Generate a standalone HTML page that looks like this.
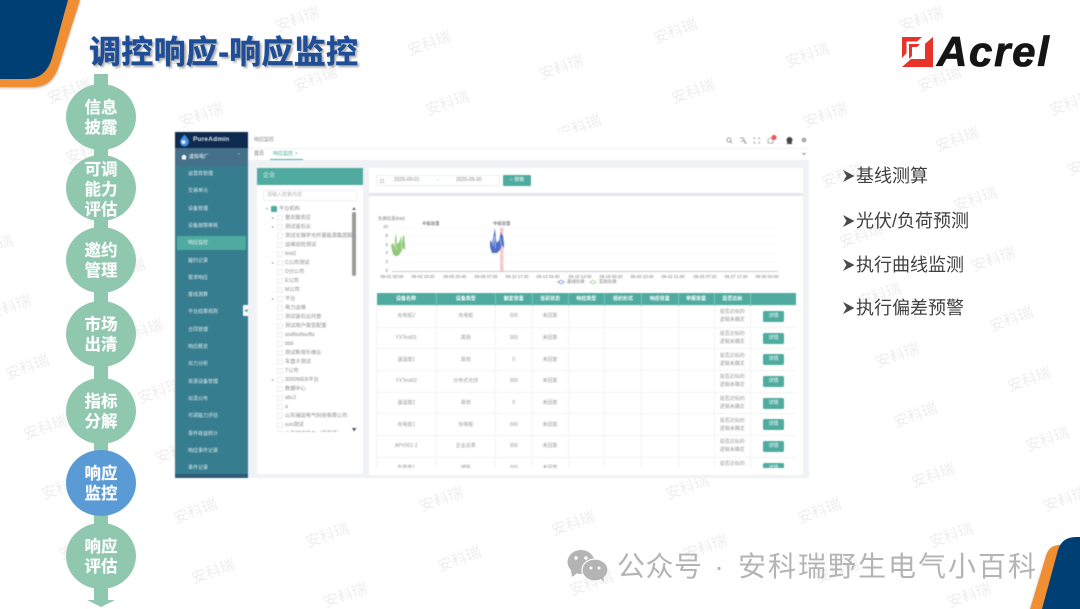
<!DOCTYPE html>
<html lang="zh-CN">
<head>
<meta charset="utf-8">
<title>调控响应-响应监控</title>
<style>
*{box-sizing:border-box;margin:0;padding:0}
html,body{width:1080px;height:609px;overflow:hidden;background:#fff}
body{position:relative;font-family:"Liberation Sans","Noto Sans CJK SC",sans-serif}
.a{position:absolute;white-space:nowrap}
svg.full{position:absolute;left:0;top:0;width:1080px;height:609px}
.wm text{font-size:15px;fill:#000;fill-opacity:.07;font-family:"Liberation Sans","Noto Sans CJK SC",sans-serif}
.ci{position:absolute;left:66px;width:70px;height:66px;padding-top:3px;border-radius:50%;background:#8fc8ae;color:#fff;font-weight:700;font-size:16.5px;line-height:19.5px;text-align:center;display:flex;align-items:center;justify-content:center;text-shadow:0 0 1px rgba(255,255,255,.5)}
.b{position:absolute;left:856px;font-size:18px;line-height:24px;color:#404040;white-space:nowrap;font-family:"Liberation Sans","Noto Sans CJK SC",sans-serif}
#app{position:absolute;left:0;top:0;width:1080px;height:609px;filter:blur(.45px)}
.m{position:absolute;left:188px;font-size:5px;line-height:8px;color:rgba(255,255,255,.85);white-space:nowrap}
.t{position:absolute;left:285px;font-size:5.2px;line-height:8px;color:#8a8a8a;white-space:nowrap}
.cb{position:absolute;left:277px;width:5.5px;height:5.5px;border:.5px solid #ececec;background:#fff;border-radius:1px}
.ar{position:absolute;left:272px;font-size:4px;line-height:8px;color:#999}
.xl{position:absolute;top:273.5px;width:30px;margin-left:-15px;text-align:center;font-size:4.3px;line-height:6px;color:#777;white-space:nowrap}
.yl{position:absolute;left:379px;width:9px;text-align:right;font-size:4.4px;line-height:6px;color:#777}
table{border-collapse:collapse;table-layout:fixed;width:420px;font-size:5px;color:#999;text-align:center}
th{background:#4fab9f;color:#fff;height:13px;font-weight:700;font-size:5px;border-right:.5px solid #7cc2b8;padding:0}
td{height:21.7px;border:.5px solid #f1f3f4;padding:0;line-height:8px;overflow:hidden}
.btn{display:inline-block;width:21px;height:11px;line-height:11px;background:#4fab9f;color:#fff;border-radius:1.5px;font-size:5px;vertical-align:middle}
</style>
</head>
<body>

<svg class="full wm" viewBox="0 0 1080 609"><g transform="translate(2 4)">
<text transform="translate(-9 248) rotate(-20)" text-anchor="middle">安科瑞</text>
<text transform="translate(9 308) rotate(-20)" text-anchor="middle">安科瑞</text>
<text transform="translate(27 368) rotate(-20)" text-anchor="middle">安科瑞</text>
<text transform="translate(45 428) rotate(-20)" text-anchor="middle">安科瑞</text>
<text transform="translate(63 488) rotate(-20)" text-anchor="middle">安科瑞</text>
<text transform="translate(81 548) rotate(-20)" text-anchor="middle">安科瑞</text>
<text transform="translate(69 92) rotate(-20)" text-anchor="middle">安科瑞</text>
<text transform="translate(87 152) rotate(-20)" text-anchor="middle">安科瑞</text>
<text transform="translate(105 212) rotate(-20)" text-anchor="middle">安科瑞</text>
<text transform="translate(123 272) rotate(-20)" text-anchor="middle">安科瑞</text>
<text transform="translate(141 332) rotate(-20)" text-anchor="middle">安科瑞</text>
<text transform="translate(159 392) rotate(-20)" text-anchor="middle">安科瑞</text>
<text transform="translate(177 452) rotate(-20)" text-anchor="middle">安科瑞</text>
<text transform="translate(195 512) rotate(-20)" text-anchor="middle">安科瑞</text>
<text transform="translate(213 572) rotate(-20)" text-anchor="middle">安科瑞</text>
<text transform="translate(183 56) rotate(-20)" text-anchor="middle">安科瑞</text>
<text transform="translate(201 116) rotate(-20)" text-anchor="middle">安科瑞</text>
<text transform="translate(327 536) rotate(-20)" text-anchor="middle">安科瑞</text>
<text transform="translate(345 596) rotate(-20)" text-anchor="middle">安科瑞</text>
<text transform="translate(297 20) rotate(-20)" text-anchor="middle">安科瑞</text>
<text transform="translate(315 80) rotate(-20)" text-anchor="middle">安科瑞</text>
<text transform="translate(441 500) rotate(-20)" text-anchor="middle">安科瑞</text>
<text transform="translate(459 560) rotate(-20)" text-anchor="middle">安科瑞</text>
<text transform="translate(429 44) rotate(-20)" text-anchor="middle">安科瑞</text>
<text transform="translate(447 104) rotate(-20)" text-anchor="middle">安科瑞</text>
<text transform="translate(573 524) rotate(-20)" text-anchor="middle">安科瑞</text>
<text transform="translate(591 584) rotate(-20)" text-anchor="middle">安科瑞</text>
<text transform="translate(561 68) rotate(-20)" text-anchor="middle">安科瑞</text>
<text transform="translate(579 128) rotate(-20)" text-anchor="middle">安科瑞</text>
<text transform="translate(687 488) rotate(-20)" text-anchor="middle">安科瑞</text>
<text transform="translate(705 548) rotate(-20)" text-anchor="middle">安科瑞</text>
<text transform="translate(675 32) rotate(-20)" text-anchor="middle">安科瑞</text>
<text transform="translate(693 92) rotate(-20)" text-anchor="middle">安科瑞</text>
<text transform="translate(819 512) rotate(-20)" text-anchor="middle">安科瑞</text>
<text transform="translate(837 572) rotate(-20)" text-anchor="middle">安科瑞</text>
<text transform="translate(807 56) rotate(-20)" text-anchor="middle">安科瑞</text>
<text transform="translate(825 116) rotate(-20)" text-anchor="middle">安科瑞</text>
<text transform="translate(843 176) rotate(-20)" text-anchor="middle">安科瑞</text>
<text transform="translate(861 236) rotate(-20)" text-anchor="middle">安科瑞</text>
<text transform="translate(879 296) rotate(-20)" text-anchor="middle">安科瑞</text>
<text transform="translate(897 356) rotate(-20)" text-anchor="middle">安科瑞</text>
<text transform="translate(915 416) rotate(-20)" text-anchor="middle">安科瑞</text>
<text transform="translate(933 476) rotate(-20)" text-anchor="middle">安科瑞</text>
<text transform="translate(951 536) rotate(-20)" text-anchor="middle">安科瑞</text>
<text transform="translate(969 596) rotate(-20)" text-anchor="middle">安科瑞</text>
<text transform="translate(921 20) rotate(-20)" text-anchor="middle">安科瑞</text>
<text transform="translate(939 80) rotate(-20)" text-anchor="middle">安科瑞</text>
<text transform="translate(957 140) rotate(-20)" text-anchor="middle">安科瑞</text>
<text transform="translate(975 200) rotate(-20)" text-anchor="middle">安科瑞</text>
<text transform="translate(993 260) rotate(-20)" text-anchor="middle">安科瑞</text>
<text transform="translate(1011 320) rotate(-20)" text-anchor="middle">安科瑞</text>
<text transform="translate(1029 380) rotate(-20)" text-anchor="middle">安科瑞</text>
<text transform="translate(1047 440) rotate(-20)" text-anchor="middle">安科瑞</text>
<text transform="translate(1065 500) rotate(-20)" text-anchor="middle">安科瑞</text>
<text transform="translate(1071 104) rotate(-20)" text-anchor="middle">安科瑞</text>
<text transform="translate(1089 164) rotate(-20)" text-anchor="middle">安科瑞</text>
</g></svg>

<!-- corner shapes -->
<svg class="full" viewBox="0 0 1080 609">
<defs><filter id="s" x="-20%" y="-20%" width="140%" height="140%"><feDropShadow dx="0" dy="1" stdDeviation="1.2" flood-color="#000" flood-opacity=".3"/></filter></defs>
<path d="M0 0H80L59 66Q52 87 34 87H0Z" fill="#ef8e33" filter="url(#s)"/>
<path d="M0 0H68L52 58Q46 79 26 79H0Z" fill="#003f73"/>
<path d="M1030 609L1046 556Q1049 545 1060 545H1080V609Z" fill="#ef8e33" filter="url(#s)"/>
<path d="M1042 609L1058 550Q1062 537 1076 537H1080V609Z" fill="#003f73"/>
<!-- stem -->
<rect x="94" y="74" width="14" height="527" fill="#8fc8ae"/>
<path d="M87 600H115L101 607Z" fill="#8fc8ae"/>
</svg>

<div class="a" style="left:89px;top:29px;font-size:32px;line-height:46px;font-weight:700;color:#1f4e96;-webkit-text-stroke:.5px #1f4e96;text-shadow:2px 2px 2px rgba(0,0,0,.35);letter-spacing:.3px">调控响应-响应监控</div>

<!-- logo -->
<svg class="full" viewBox="0 0 1080 609">
<path d="M933 37V67H902L911 59H925V44Z" fill="#e8322a"/>
<path d="M902 37H922L917 41.500H906.500V53L902 58Z" fill="#e8322a"/>
<path d="M909 44H920L917 47H912V56L909 59Z" fill="#e8322a"/>
<path d="M912 47H925V59H912Z" fill="#fff"/>
<path d="M925 44L933 37V44Z" fill="#e8322a"/>
<text x="937" y="66" font-family="Liberation Sans" font-weight="700" font-style="italic" font-size="42" letter-spacing="1.700" fill="#151515" stroke="#151515" stroke-width=".8">Acrel</text>
</svg>

<!-- circles -->
<div class="ci" style="top:84px">信息<br>披露</div>
<div class="ci" style="top:155px;line-height:20px">可调<br>能力<br>评估</div>
<div class="ci" style="top:227px">邀约<br>管理</div>
<div class="ci" style="top:301px">市场<br>出清</div>
<div class="ci" style="top:378px">指标<br>分解</div>
<div class="ci" style="top:450px;background:#5b9bd5">响应<br>监控</div>
<div class="ci" style="top:523px">响应<br>评估</div>

<!-- application screenshot -->
<div id="app">
<div class="a" style="left:175px;top:132px;width:634px;height:346px;background:#fff"></div>
<!-- sidebar -->
<div class="a" style="left:175px;top:148px;width:73px;height:330px;background:#367d8f"></div>
<div class="a" style="left:175px;top:132px;width:73px;height:16px;background:#0e2a4e"></div>
<div class="a" style="left:175px;top:148px;width:73px;height:18px;background:#44708a"></div>
<div class="a" style="left:175px;top:474px;width:73px;height:4px;background:#2f5a7a"></div>
<svg class="a" style="left:179px;top:134px" width="11" height="13" viewBox="0 0 11 13"><path d="M5.500 .5C8 3.500 10 5.500 10 8A4.500 4.500 0 0 1 1 8C1 5.500 3 3.500 5.500 .5Z" fill="#3f8fe0"/><circle cx="4.500" cy="8" r="2" fill="#dbeeff"/></svg>
<div class="a" style="left:193px;top:136px;font-size:6.500px;line-height:8px;font-weight:700;color:#dfe6ee;letter-spacing:.2px">PureAdmin</div>
<svg class="a" style="left:181px;top:154px" width="6" height="6" viewBox="0 0 6 6"><path d="M3 .5L6 3H5V5.500H1V3H0Z" fill="#fff"/></svg>
<div class="a" style="left:189px;top:153px;font-size:5px;line-height:8px;color:#fff">虚拟电厂</div>
<div class="a" style="left:237px;top:152px;font-size:5px;line-height:8px;color:#cfe0e6">⌃</div>
<div class="a" style="left:177px;top:236px;width:69px;height:14px;background:#4fab9f;border-radius:1px"></div>
<div class="m" style="top:170px">运营商管理</div>
<div class="m" style="top:187.300px">交易单元</div>
<div class="m" style="top:204.700px">设备管理</div>
<div class="m" style="top:222px">设备故障审核</div>
<div class="m" style="top:239.300px">响应监控</div>
<div class="m" style="top:256.700px">履约记录</div>
<div class="m" style="top:274px">需求响应</div>
<div class="m" style="top:291.300px">基线测算</div>
<div class="m" style="top:308.300px">平台结算规则</div>
<div class="m" style="top:325.600px">合同管理</div>
<div class="m" style="top:343px">响应概览</div>
<div class="m" style="top:360.300px">出力分析</div>
<div class="m" style="top:377.600px">资源设备管理</div>
<div class="m" style="top:395px">出清公布</div>
<div class="m" style="top:412.300px">可调能力评估</div>
<div class="m" style="top:429.600px">事件收益统计</div>
<div class="m" style="top:447px">响应事件记录</div>
<div class="m" style="top:464px">事件记录</div>
<div class="a" style="left:243px;top:305px;width:5px;height:11px;background:#fff;border-radius:1px 0 0 1px"></div>
<div class="a" style="left:244px;top:308px;font-size:4px;line-height:5px;color:#4fab9f">◀</div>

<!-- top bar -->
<div class="a" style="left:254px;top:136px;font-size:5px;line-height:8px;color:#888">响应监控</div>
<div class="a" style="left:248px;top:148px;width:561px;height:.6px;background:#f2f2f2"></div>
<div class="a" style="left:254px;top:150px;font-size:5px;line-height:8px;color:#777">首页</div>
<div class="a" style="left:273px;top:150px;font-size:5px;line-height:8px;color:#4fab9f">响应监控</div>
<div class="a" style="left:295px;top:150px;font-size:5px;line-height:8px;color:#6bb">×</div>
<div class="a" style="left:270px;top:158.500px;width:33px;height:1.200px;background:#4fab9f"></div>
<svg class="a" style="left:725px;top:135px" width="85" height="24" viewBox="0 0 85 24">
<circle cx="4" cy="5" r="2" fill="none" stroke="#888" stroke-width=".8"/><path d="M5.500 6.500L7 8" stroke="#888" stroke-width=".8"/>
<path d="M15 3h3l3 5h-2M16 6h3" fill="none" stroke="#888" stroke-width=".8"/>
<path d="M29 4.500V3h1.500M33 3h1.500V4.500M34.500 6.500V8H33M30.500 8H29V6.500" fill="none" stroke="#999" stroke-width=".7"/>
<path d="M43 8V4.500L45.500 3L48 4.500V8Z" fill="none" stroke="#999" stroke-width=".7"/>
<circle cx="49" cy="2.500" r="2.600" fill="#ef5a5a"/>
<circle cx="64.500" cy="5" r="3" fill="#444"/><path d="M61.500 9L64.500 4L67.500 9Z" fill="#444"/>
<circle cx="79" cy="5" r="2.300" fill="#999"/><circle cx="79" cy="5" r=".8" fill="#ddd"/>
<path d="M77.500 18l1.500 1.500 1.500-1.500" fill="none" stroke="#666" stroke-width=".7"/>
</svg>

<!-- content bg -->
<div class="a" style="left:248px;top:160px;width:561px;height:318px;background:#f0f2f6"></div>

<!-- left card -->
<div class="a" style="left:257px;top:168px;width:106px;height:306px;background:#fff"></div>
<div class="a" style="left:257px;top:168px;width:106px;height:17px;background:#4fab9f"></div>
<div class="a" style="left:263px;top:172px;font-size:6px;line-height:9px;color:#e8f5f3">企业</div>
<div class="a" style="left:263px;top:190px;width:94px;height:11px;border:.6px solid #eceef1;border-radius:1px"></div>
<div class="a" style="left:267px;top:192px;font-size:5px;line-height:7px;color:#b5b5b5">请输入检索内容</div>
<div class="a" style="left:257px;top:204px;width:95px;height:228px;overflow:hidden">
<div style="position:absolute;left:-257px;top:-204px;width:400px;height:500px">
<div class="ar" style="left:266px;top:205px">▾</div>
<div class="cb" style="left:271px;top:206px;background:#4fab9f;border-color:#4fab9f"></div>
<div class="t" style="left:279px;top:205px">平台机构</div>
<div class="ar" style="top:214px">▸</div><div class="cb" style="top:215px"></div><div class="t" style="top:214px">重庆服务区</div>
<div class="ar" style="top:223px">▸</div><div class="cb" style="top:224px"></div><div class="t" style="top:223px">测试宙石云</div>
<div class="cb" style="top:233px"></div><div class="t" style="top:232px">测试无锡学光纤屋能源集团股份有限公司</div>
<div class="cb" style="top:242px"></div><div class="t" style="top:241px">运维巡检测试</div>
<div class="cb" style="top:251px"></div><div class="t" style="top:250px">test2</div>
<div class="ar" style="top:259px">▸</div><div class="cb" style="top:260px"></div><div class="t" style="top:259px">C公司测试</div>
<div class="cb" style="top:269px"></div><div class="t" style="top:268px">D分公司</div>
<div class="cb" style="top:278px"></div><div class="t" style="top:277px">E公司</div>
<div class="cb" style="top:287px"></div><div class="t" style="top:286px">M公司</div>
<div class="ar" style="top:295px">▸</div><div class="cb" style="top:296px"></div><div class="t" style="top:295px">平台</div>
<div class="cb" style="top:305px"></div><div class="t" style="top:304px">电力运维</div>
<div class="cb" style="top:314px"></div><div class="t" style="top:313px">测试宙石云托管</div>
<div class="cb" style="top:323px"></div><div class="t" style="top:322px">测试用户报告配置</div>
<div class="cb" style="top:332px"></div><div class="t" style="top:331px">asdfasfasdfa</div>
<div class="cb" style="top:341px"></div><div class="t" style="top:340px">bbb</div>
<div class="cb" style="top:350px"></div><div class="t" style="top:349px">测试新增乐维云</div>
<div class="cb" style="top:359px"></div><div class="t" style="top:358px">车盘子测试</div>
<div class="cb" style="top:368px"></div><div class="t" style="top:367px">T公司</div>
<div class="ar" style="top:376px">▸</div><div class="cb" style="top:377px"></div><div class="t" style="top:376px">3000WEB平台</div>
<div class="cb" style="top:386px"></div><div class="t" style="top:385px">数据中心</div>
<div class="cb" style="top:395px"></div><div class="t" style="top:394px">abc2</div>
<div class="cb" style="top:404px"></div><div class="t" style="top:403px">a</div>
<div class="cb" style="top:413px"></div><div class="t" style="top:412px">山东瑞迩电气科技有限公司</div>
<div class="cb" style="top:422px"></div><div class="t" style="top:421px">sun测试</div>
<div class="cb" style="top:431px"></div><div class="t" style="top:430px">山东瑞迩电力（哥哥哥）</div>
</div></div>
<div class="a" style="left:352px;top:212px;width:4px;height:64px;background:#9a9a9a;border-radius:2px"></div>
<svg class="a" style="left:351px;top:205px" width="6" height="230" viewBox="0 0 6 230"><path d="M3 2L5 5H1Z" fill="#777"/><path d="M1 223H5.500L3 226.500Z" fill="#555"/></svg>

<!-- search card -->
<div class="a" style="left:369px;top:168px;width:434px;height:25px;background:#fff"></div>
<div class="a" style="left:369px;top:193px;width:434px;height:3px;background:#e4e6ec"></div>
<div class="a" style="left:376px;top:175px;width:124px;height:11px;border:.6px solid #eceef1;border-radius:1px"></div>
<div class="a" style="left:380px;top:178.500px;width:4px;height:4px;border:.5px solid #ccc"></div>
<div class="a" style="left:394px;top:177px;font-size:5px;line-height:7px;color:#888">2025-09-01</div>
<div class="a" style="left:437px;top:177px;font-size:5px;line-height:7px;color:#888">-</div>
<div class="a" style="left:456px;top:177px;font-size:5px;line-height:7px;color:#888">2025-09-30</div>
<div class="a" style="left:503px;top:175px;width:28px;height:11px;background:#4fab9f;border-radius:1px;color:#fff;font-size:5px;line-height:11px;text-align:center">○ 搜索</div>

<!-- chart card -->
<div class="a" style="left:369px;top:196px;width:434px;height:279px;background:#fff"></div>
<div class="a" style="left:378px;top:216px;font-size:4.400px;line-height:6px;color:#777">负荷信息(kW)</div>
<div class="a" style="left:422px;top:220.500px;font-size:4.400px;line-height:6px;color:#555">中报容量</div>
<div class="a" style="left:493px;top:220.500px;font-size:4.400px;line-height:6px;color:#555">中报容量</div>
<div class="yl" style="top:224px">10</div>
<div class="yl" style="top:233px">8</div>
<div class="yl" style="top:241.500px">6</div>
<div class="yl" style="top:250px">4</div>
<div class="yl" style="top:259px">2</div>
<div class="yl" style="top:268px">0</div>
<svg class="full" viewBox="0 0 1080 609">
<rect x="500" y="228" width="3.500" height="43" fill="#f6c9c9"/>
<path d="M392 227.500H778M392 236.500H778M392 245H778M392 254H778M392 262.500H778" stroke="#f2f2f2" stroke-width=".6"/>
<path d="M392 271.500H778" stroke="#ccc" stroke-width=".9"/>
<path d="M391 245L393 243L394 246L396 233L397 243L398 244L400 240L401 236L402 243L403 236L404 235L405 245L405 250L403 248L401 252L399 255L397 256L395 256L393 254L392 250Z" fill="#93c97b"/>
<path d="M394 247L395.500 241L396.500 250M401 241L402 249" stroke="#d6eccb" stroke-width=".7" fill="none"/>
<path d="M490 242L491 240L492 244L494 233L495 228L496 240L497 243L499 240L501 232L502 235L503 236L504 244L504 248L502 245L500 250L497 253L494 253L492 253L491 250L490 247Z" fill="#4f6fc6"/>
<path d="M493 246L494.500 236L495.500 248M500 238L501.500 246" stroke="#c3cfee" stroke-width=".7" fill="none"/>
<path d="M557 282H565" stroke="#5a78cc" stroke-width=".6"/><circle cx="561" cy="282" r="1.800" fill="#fff" stroke="#5a78cc" stroke-width=".7"/>
<path d="M589 282H597" stroke="#93c97b" stroke-width=".6"/><circle cx="593" cy="282" r="1.800" fill="#fff" stroke="#93c97b" stroke-width=".7"/>
</svg>
<div class="xl" style="left:392px">09-01 00:00</div>
<div class="xl" style="left:423px">09-03 10:20</div>
<div class="xl" style="left:454.700px">09-05 20:40</div>
<div class="xl" style="left:486px">09-08 07:00</div>
<div class="xl" style="left:517px">09-10 17:20</div>
<div class="xl" style="left:548px">09-13 03:40</div>
<div class="xl" style="left:580px">09-15 14:00</div>
<div class="xl" style="left:611px">09-18 00:20</div>
<div class="xl" style="left:642px">09-20 10:40</div>
<div class="xl" style="left:673px">09-22 21:00</div>
<div class="xl" style="left:705px">09-25 07:20</div>
<div class="xl" style="left:736px">09-27 17:40</div>
<div class="xl" style="left:767px">09-30 04:00</div>
<div class="a" style="left:567px;top:279px;font-size:4.400px;line-height:6px;color:#777">基线负荷</div>
<div class="a" style="left:599px;top:279px;font-size:4.400px;line-height:6px;color:#777">实际负荷</div>

<!-- table -->
<div class="a" style="left:376px;top:292.500px;width:420px;height:175.200px;overflow:hidden">
<table>
<colgroup><col style="width:59.500px"><col style="width:59.500px"><col style="width:36.500px"><col style="width:36px"><col style="width:36.500px"><col style="width:37px"><col style="width:36.500px"><col style="width:36px"><col style="width:36.500px"><col style="width:46px"></colgroup>
<tr><th>设备名称</th><th>设备类型</th><th>额定容量</th><th>当前状态</th><th>响应类型</th><th>组织形式</th><th>响应容量</th><th>申报容量</th><th>是否达标</th><th></th></tr>
<tr><td>充电桩2</td><td>充电桩</td><td>300</td><td>未回复</td><td></td><td></td><td></td><td></td><td>是否达标的<br>逻辑未确定</td><td><span class="btn">详情</span></td></tr>
<tr><td>YXTest01</td><td>其他</td><td>300</td><td>未回复</td><td></td><td></td><td></td><td></td><td>是否达标的<br>逻辑未确定</td><td><span class="btn">详情</span></td></tr>
<tr><td>温湿度1</td><td>其他</td><td>0</td><td>未回复</td><td></td><td></td><td></td><td></td><td>是否达标的<br>逻辑未确定</td><td><span class="btn">详情</span></td></tr>
<tr><td>YXTest02</td><td>分布式光伏</td><td>300</td><td>未回复</td><td></td><td></td><td></td><td></td><td>是否达标的<br>逻辑未确定</td><td><span class="btn">详情</span></td></tr>
<tr><td>温湿度2</td><td>其他</td><td>0</td><td>未回复</td><td></td><td></td><td></td><td></td><td>是否达标的<br>逻辑未确定</td><td><span class="btn">详情</span></td></tr>
<tr><td>充电桩1</td><td>充电桩</td><td>300</td><td>未回复</td><td></td><td></td><td></td><td></td><td>是否达标的<br>逻辑未确定</td><td><span class="btn">详情</span></td></tr>
<tr><td>APV001-2</td><td>企业总表</td><td>300</td><td>未回复</td><td></td><td></td><td></td><td></td><td>是否达标的<br>逻辑未确定</td><td><span class="btn">详情</span></td></tr>
<tr><td>负荷表1</td><td>储能</td><td>300</td><td>未回复</td><td></td><td></td><td></td><td></td><td>是否达标的<br>逻辑未确定</td><td><span class="btn">详情</span></td></tr>
</table>
</div>
</div>

<!-- right bullets -->
<svg class="full" viewBox="0 0 1080 609">
<defs><path id="ba" d="M0 -6L11.500 0L0 6L3.500 0Z" fill="#4a4a4a"/></defs>
<use href="#ba" x="843" y="176"/><use href="#ba" x="843" y="221"/><use href="#ba" x="843" y="265"/><use href="#ba" x="843" y="308"/>
</svg>
<div class="b" style="top:164px">基线测算</div>
<div class="b" style="top:209px">光伏/负荷预测</div>
<div class="b" style="top:253px">执行曲线监测</div>
<div class="b" style="top:296px">执行偏差预警</div>

<!-- bottom wechat mark -->
<svg class="full" viewBox="0 0 1080 609">
<ellipse cx="581" cy="562" rx="13.500" ry="12" fill="#b4b4b4"/>
<path d="M571 570L572 577L579 572Z" fill="#b4b4b4"/>
<circle cx="576" cy="558" r="1.700" fill="#fff"/><circle cx="586" cy="558" r="1.700" fill="#fff"/>
<ellipse cx="595" cy="570" rx="13" ry="11" fill="#b4b4b4" stroke="#fff" stroke-width="1.200"/>
<path d="M600 578L604 582L603 575Z" fill="#b4b4b4"/>
<circle cx="591" cy="568" r="1.500" fill="#fff"/><circle cx="599" cy="568" r="1.500" fill="#fff"/>
</svg>
<div class="a" style="left:617px;top:546px;font-size:28px;line-height:42px;color:#b4b4b4;letter-spacing:.5px">公众号</div>
<div class="a" style="left:708px;top:546px;font-size:28px;line-height:42px;color:#b4b4b4;width:22px;text-align:center">·</div>
<div class="a" style="left:738px;top:546px;font-size:28px;line-height:42px;color:#b4b4b4;letter-spacing:2px">安科瑞野生电气小百科</div>

</body>
</html>
